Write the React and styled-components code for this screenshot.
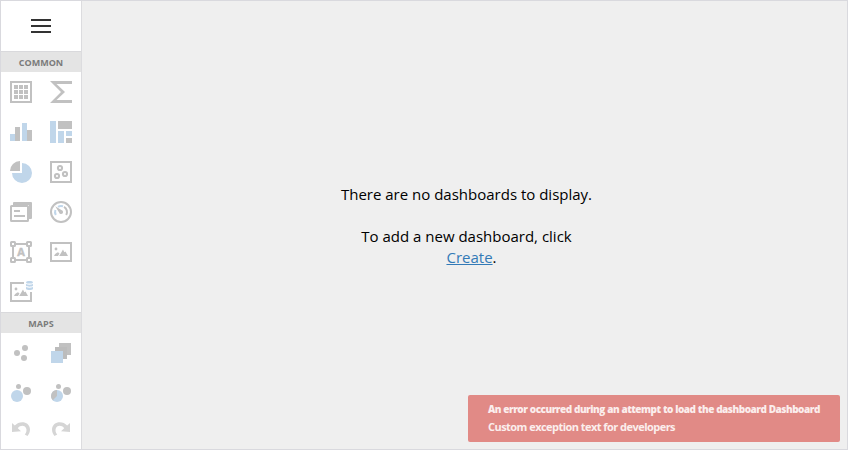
import React from "react";
import styled, { createGlobalStyle } from "styled-components";

const GRAY = "#c1c1c1";
const BLUE = "#c0d6ea";

const GlobalStyle = createGlobalStyle`
  *, *::before, *::after { box-sizing: border-box; }
  body { margin: 0; background: #efefef; }
`;

const Frame = styled.div`
  position: relative;
  display: flex;
  width: 848px;
  height: 450px;
  overflow: hidden;
  border: 1px solid #d9d9de;
  background: #efefef;
  font-family: "Open Sans", "Noto Sans", sans-serif;
`;

const Toolbox = styled.aside`
  display: flex;
  flex-direction: column;
  flex: none;
  width: 81px;
  border-right: 1px solid #dcdcdf;
  background: #ffffff;
`;

const MenuButton = styled.button`
  display: flex;
  flex-direction: column;
  align-items: center;
  justify-content: center;
  gap: 4px;
  height: 50px;
  padding: 0;
  border: 0;
  background: none;
`;

const MenuLine = styled.span`
  width: 20px;
  height: 2px;
  background: #333333;
`;

const GroupTitle = styled.h2`
  height: 21px;
  margin: 0;
  border-top: 1px solid #d9d9dc;
  background: #e4e4e4;
  color: #7b7b7b;
  font-size: 9px;
  font-weight: 700;
  line-height: 21px;
  text-align: center;
`;

const Tools = styled.div`
  display: grid;
  grid-template-columns: 40px 40px;
  grid-auto-rows: ${(p) => p.$row || 40}px;
`;

const Tool = styled.button`
  display: flex;
  align-items: center;
  justify-content: center;
  padding: 0;
  border: 0;
  background: none;
`;

const Glyph = styled.svg`
  display: block;
  width: 24px;
  height: 24px;
`;

const GlyphLetter = styled.text`
  fill: ${GRAY};
  stroke: ${GRAY};
  stroke-width: 0.4px;
  font: 700 11px "Open Sans", sans-serif;
  text-anchor: middle;
`;

const Surface = styled.main`
  display: flex;
  flex: 1;
  flex-direction: column;
  align-items: center;
  padding-top: 183px;
  padding-left: 4px;
`;

const Message = styled.p`
  margin: 0 0 21px;
  color: #000000;
  font-size: 15px;
  line-height: 21px;
  text-align: center;
`;

const CreateLink = styled.a`
  margin-left: 10px;
  color: #337ab7;
  text-decoration: underline;
`;

const Toast = styled.div`
  position: absolute;
  right: 7px;
  bottom: 7px;
  width: 372px;
  height: 47px;
  padding: 6px 20px 0;
  border-radius: 2px;
  background: #e18a86;
  color: #fbeeed;
  white-space: nowrap;
`;

const ToastTitle = styled.div`
  font-size: 10px;
  font-weight: 800;
  line-height: 17px;
  letter-spacing: -0.5px;
  word-spacing: 0.25px;
`;

const ToastText = styled.div`
  font-size: 11px;
  font-weight: 700;
  line-height: 18px;
  letter-spacing: -0.54px;
`;

const Icon = ({ children }) => (
  <Glyph viewBox="0 0 24 24" fill={GRAY} aria-hidden="true">
    {children}
  </Glyph>
);

const outline = { fill: "none", stroke: GRAY, strokeWidth: 2 };

const GridIcon = () => (
  <Icon>
    <rect x="2" y="2" width="20" height="20" {...outline} />
    {[5, 10, 15].map((y) =>
      [5, 10, 15].map((x) => <rect key={`${x}-${y}`} x={x} y={y} width="4" height="4" />)
    )}
  </Icon>
);

const PivotIcon = () => (
  <Icon>
    <path d="M1 1H23V4H7.5L16 12L7.5 20H23V23H1L12 12Z" />
  </Icon>
);

const ChartIcon = () => (
  <Icon>
    <path fill={BLUE} d="M1 14H6V21H1ZM13 3H18V21H13Z" />
    <path d="M6 7H11V21H6ZM18 10H23V21H18Z" />
  </Icon>
);

const TreemapIcon = () => (
  <Icon>
    <path fill={BLUE} d="M1 1H7V23H1ZM9 11H15V23H9ZM17 11H23V16H17Z" />
    <path d="M9 1H23V9H9ZM17 18H23V23H17Z" />
  </Icon>
);

const PieIcon = () => (
  <Icon>
    <path d="M11 1V11H1A10 10 0 0 1 11 1Z" />
    <path fill={BLUE} d="M13 3A10 10 0 1 1 3 13H13Z" />
  </Icon>
);

const ScatterIcon = () => (
  <Icon>
    <g {...outline}>
      <rect x="2" y="2" width="20" height="20" />
      <circle cx="11" cy="8" r="2.1" />
      <circle cx="8" cy="16" r="2.1" />
      <circle cx="16" cy="14" r="2.1" />
    </g>
  </Icon>
);

const CardsIcon = () => (
  <Icon>
    <path d="M5 2H22A1 1 0 0 1 23 3V18A1 1 0 0 1 22 19H20V5H4V3A1 1 0 0 1 5 2Z" />
    <rect x="2" y="6" width="17" height="15" rx="0.5" {...outline} />
    <path d="M5 10H11V12H5ZM5 15H16V17H5Z" />
  </Icon>
);

const GaugeIcon = () => (
  <Icon>
    <circle cx="12" cy="12" r="10" {...outline} />
    <path d="M6.8 15A6 6 0 0 1 6.4 10M9 6.8A6 6 0 0 1 14 6.3" fill="none" stroke={BLUE} strokeWidth="2" />
    <path d="M15 6.8A6 6 0 0 1 17.2 15" {...outline} />
    <path d="M6.2 6.2L12.4 10.1A2 2 0 1 1 10.1 12.4Z" />
  </Icon>
);

const TextBoxIcon = () => (
  <Icon>
    <g {...outline}>
      <path d="M7 4H17M7 20H17M4 7V17M20 7V17" />
      {[2, 18].map((y) => [2, 18].map((x) => <rect key={`${x}-${y}`} x={x} y={y} width="4" height="4" rx="0.5" />))}
    </g>
    <GlyphLetter x="12" y="16">A</GlyphLetter>
  </Icon>
);

const Landscape = () => (
  <>
    <circle cx="7" cy="9" r="1.4" />
    <path d="M5 16C6 13.8 7.5 12.8 9 12.2L10.5 13.4L9 16ZM10.2 16L14 9.5L15.3 12.2L16.5 11.5L19 16Z" />
  </>
);

const ImageIcon = () => (
  <Icon>
    <rect x="2" y="3" width="20" height="18" {...outline} />
    <Landscape />
  </Icon>
);

const BoundImageIcon = () => (
  <Icon>
    <path d="M15 3H2V21H22V12" {...outline} />
    <Landscape />
    <path
      fill={BLUE}
      d="M17 2.4C17 .6 24 .6 24 2.4C24 4 17 4 17 2.4ZM17 4C19 5 22 5 24 4V5.8C23 7 18 7 17 5.8ZM17 7C19 8 22 8 24 7V9C23 10.3 18 10.3 17 9Z"
    />
  </Icon>
);

const GeoPointIcon = () => (
  <Icon>
    <circle cx="16" cy="7" r="3" />
    <circle cx="8" cy="12" r="3" />
    <circle cx="15" cy="17" r="3" />
  </Icon>
);

const ChoroplethIcon = () => (
  <Icon>
    <path d="M10 2H22V14H10Z" />
    <path fill="#bcbcbc" d="M6 6H18V18H6Z" />
    <path fill={BLUE} d="M2 10H14V22H2Z" />
  </Icon>
);

const BubbleMapIcon = () => (
  <Icon>
    <circle cx="9.5" cy="5.5" r="2.5" />
    <circle cx="18" cy="10" r="4" />
    <circle cx="8" cy="15" r="6" fill={BLUE} />
  </Icon>
);

const PieMapIcon = () => (
  <Icon>
    <circle cx="9.5" cy="5.5" r="2.5" />
    <circle cx="18" cy="10" r="4" />
    <circle cx="8" cy="15" r="6" fill={BLUE} />
    <path d="M8 9V15L3.8 19.2A6 6 0 0 1 8 9Z" />
  </Icon>
);

const HistoryArrow = () => (
  <path
    fill="#d5d5d5"
    d="M3 4L5.8 6.6C10.5 .8 21 2.5 21 10.5C21 13 20 15.2 18.5 17L15.8 15.5C17.5 13.5 18 11 17 9C15.5 6 11.3 6 8.8 9.2L12 12.2L3 13Z"
  />
);

const UndoIcon = () => (
  <Icon>
    <HistoryArrow />
  </Icon>
);

const RedoIcon = () => (
  <Icon>
    <g transform="translate(24 0) scale(-1 1)">
      <HistoryArrow />
    </g>
  </Icon>
);

const commonTools = [
  ["Grid", GridIcon],
  ["Pivot", PivotIcon],
  ["Chart", ChartIcon],
  ["Treemap", TreemapIcon],
  ["Pies", PieIcon],
  ["Scatter Chart", ScatterIcon],
  ["Cards", CardsIcon],
  ["Gauges", GaugeIcon],
  ["Text Box", TextBoxIcon],
  ["Image", ImageIcon],
  ["Bound Image", BoundImageIcon],
];

const mapTools = [
  ["Geo Point Map", GeoPointIcon],
  ["Choropleth Map", ChoroplethIcon],
  ["Bubble Map", BubbleMapIcon],
  ["Pie Map", PieMapIcon],
];

const historyTools = [
  ["Undo", UndoIcon],
  ["Redo", RedoIcon],
];

const ToolGrid = ({ items, row }) => (
  <Tools $row={row}>
    {items.map(([label, Drawing]) => (
      <Tool key={label} aria-label={label}>
        <Drawing />
      </Tool>
    ))}
  </Tools>
);

export default function App() {
  return (
    <>
      <GlobalStyle />
      <Frame>
        <Toolbox>
          <MenuButton aria-label="Menu">
            <MenuLine />
            <MenuLine />
            <MenuLine />
          </MenuButton>
          <GroupTitle>COMMON</GroupTitle>
          <ToolGrid items={commonTools} />
          <GroupTitle>MAPS</GroupTitle>
          <ToolGrid items={mapTools} />
          <ToolGrid items={historyTools} row={36} />
        </Toolbox>
        <Surface>
          <Message>There are no dashboards to display.</Message>
          <Message>
            To add a new dashboard, click
            <br />
            <CreateLink href="#create">Create</CreateLink>.
          </Message>
        </Surface>
        <Toast role="alert">
          <ToastTitle>An error occurred during an attempt to load the dashboard Dashboard</ToastTitle>
          <ToastText>Custom exception text for developers</ToastText>
        </Toast>
      </Frame>
    </>
  );
}
